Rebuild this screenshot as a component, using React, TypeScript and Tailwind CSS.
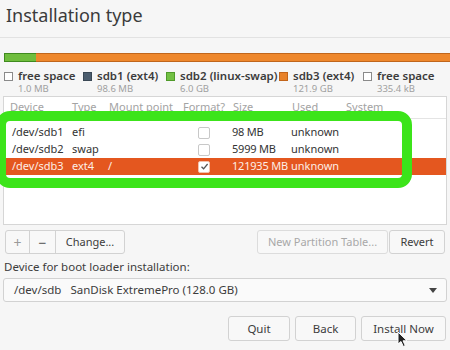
import React from 'react';

const font = { fontFamily: '"Noto Sans", "DejaVu Sans", sans-serif' };

const legend = [
  { box: 'border border-[#8a8a8a] bg-white', name: 'free space', size: '1.0 MB', w: 'w-[79px]' },
  { box: 'bg-[#4b5d6e] border border-[#3a4855]', name: 'sdb1 (ext4)', size: '98.6 MB', w: 'w-[83px]' },
  { box: 'bg-[#72c043] border border-[#4f9a2a]', name: 'sdb2 (linux-swap)', size: '6.0 GB', w: 'w-[113px]' },
  { box: 'bg-[#e8822a] border border-[#c2641a]', name: 'sdb3 (ext4)', size: '121.9 GB', w: 'w-[84px]' },
  { box: 'border border-[#8a8a8a] bg-white', name: 'free space', size: '335.4 kB', w: 'w-[80px]' },
];

const rows = [
  { dev: '/dev/sdb1', type: 'efi', mount: '', fmt: false, size: '98 MB', used: 'unknown', sel: false },
  { dev: '/dev/sdb2', type: 'swap', mount: '', fmt: false, size: '5999 MB', used: 'unknown', sel: false },
  { dev: '/dev/sdb3', type: 'ext4', mount: '/', fmt: true, size: '121935 MB', used: 'unknown', sel: true },
];

const cols = 'grid grid-cols-[62px_37px_74px_50px_59px_54px_1fr]';

const App = () => {
  return (
    <div className="relative w-[450px] h-[350px] overflow-hidden bg-[#f6f6f6] text-[#3c3c3c]" style={font}>
      {/* Title */}
      <div className="h-[38px] border-b border-[#e2e2e2] px-[6px] pt-[3px] text-[18px] leading-[25px] text-[#3b3b3b]">
        Installation type
      </div>

      {/* Partition bar */}
      <div className="mt-[15px] ml-[4px] flex h-[9px] overflow-hidden">
        <div className="w-[32px] bg-[#6fbd3d] border-y border-l border-[#3f8a1e]" />
        <div className="flex-1 bg-[#ee872c] border-y border-[#c0661c]" />
      </div>

      {/* Legend */}
      <div className="mt-[6px] flex pl-[4px]">
        {legend.map((l, i) => (
          <div key={i} className={`${l.w} flex gap-[5px]`}>
            <div className={`mt-[4px] h-[9px] w-[9px] shrink-0 ${l.box}`} />
            <div className="flex flex-col">
              <span className="text-[11.5px] leading-[15px] font-semibold text-[#3c3c3c] whitespace-nowrap">{l.name}</span>
              <span className="text-[9.5px] leading-[11px] text-[#a0a0a0]">{l.size}</span>
            </div>
          </div>
        ))}
      </div>

      {/* Table */}
      <div className="relative mx-[3px] mt-[2px]">
        <div className="h-[129px] border border-[#d6d6d6] bg-white">
          <div className={`${cols} h-[22px] items-center border-b border-[#e4e4e4] pl-[6px] text-[11px] text-[#a3a3a3]`}>
            <span>Device</span>
            <span>Type</span>
            <span>Mount point</span>
            <span>Format?</span>
            <span>Size</span>
            <span>Used</span>
            <span>System</span>
          </div>
          <div className="pt-[5px]">
            {rows.map((r, i) => (
              <div
                key={i}
                className={`${cols} h-[17px] items-center pl-[8px] text-[11px] ${r.sel ? 'bg-[#e4571f] text-[#fdeee6]' : 'text-[#333]'}`}
              >
                <span>{r.dev}</span>
                <span className="-ml-[2px]">{r.type}</span>
                <span className="-ml-[3px]">{r.mount}</span>
                <span className="flex pl-[13px]">
                  <span
                    className={`flex h-[12px] w-[12px] items-center justify-center rounded-[2px] border ${
                      r.fmt ? 'border-[#f3c2ad] bg-white' : 'border-[#c8c8c8] bg-white'
                    }`}
                  >
                    {r.fmt && (
                      <svg width="9" height="9" viewBox="0 0 9 9">
                        <path d="M1.5 4.8 L3.6 6.8 L7.6 2" fill="none" stroke="#555" strokeWidth="1.3" />
                      </svg>
                    )}
                  </span>
                </span>
                <span className="-ml-[3px] whitespace-nowrap tracking-[-0.2px]">{r.size}</span>
                <span className="-ml-[3px]">{r.used}</span>
                <span />
              </div>
            ))}
          </div>
        </div>
        {/* annotation */}
        <div className="absolute left-[-7px] top-[15px] h-[77px] w-[416px] rounded-[14px] border-[10px] border-[#3ce41a]" />
      </div>

      {/* Buttons row */}
      <div className="mt-[5px] flex px-[5px] text-[11px]">
        <div className="flex h-[24px] rounded-[3px] border border-[#d2d2d2] bg-[#f8f8f8]">
          <span className="flex w-[24px] items-center justify-center border-r border-[#d2d2d2] text-[#9a9a9a] text-[14px]">+</span>
          <span className="flex w-[26px] items-center justify-center border-r border-[#d2d2d2] text-[#555] text-[14px]">−</span>
          <span className="flex w-[68px] items-center justify-center text-[#3c3c3c]">Change...</span>
        </div>
        <div className="ml-auto flex h-[24px]">
          <span className="flex w-[131px] items-center justify-center rounded-[3px] border border-[#dcdcdc] bg-[#f8f8f8] text-[#a8a8a8]">
            New Partition Table...
          </span>
          <span className="ml-[1px] flex w-[56px] items-center justify-center rounded-[3px] border border-[#d2d2d2] bg-[#f8f8f8] text-[#3c3c3c]">
            Revert
          </span>
        </div>
      </div>

      {/* Boot loader */}
      <div className="mt-[5px] pl-[4px] text-[11.5px] leading-[15px] text-[#3c3c3c]">Device for boot loader installation:</div>
      <div className="mx-[3px] mt-[4px] flex h-[24px] items-center rounded-[3px] border border-[#d2d2d2] bg-[#fafafa] pl-[10px] pr-[9px] text-[11.5px] text-[#3c3c3c]">
        <span>/dev/sdb</span>
        <span className="ml-[9px]">SanDisk ExtremePro (128.0 GB)</span>
        <svg className="ml-auto" width="8" height="5" viewBox="0 0 8 5">
          <path d="M0 0 L8 0 L4 5 Z" fill="#444" />
        </svg>
      </div>

      {/* Bottom buttons */}
      <div className="mt-[14px] flex justify-end gap-[5px] pr-[4px] text-[11.5px] text-[#3c3c3c]">
        <span className="flex h-[25px] w-[62px] items-center justify-center rounded-[3px] border border-[#d2d2d2] bg-[#f8f8f8]">Quit</span>
        <span className="flex h-[25px] w-[61px] items-center justify-center rounded-[3px] border border-[#d2d2d2] bg-[#f8f8f8]">Back</span>
        <span className="flex h-[25px] w-[85px] items-center justify-center rounded-[3px] border border-[#d2d2d2] bg-[#f8f8f8]">Install Now</span>
      </div>

      {/* mouse cursor */}
      <svg className="absolute left-[397px] top-[331px]" width="12" height="17" viewBox="0 0 12 17">
        <path d="M1 1 L1 13 L4 10.5 L6.3 15.5 L8.3 14.6 L6 9.8 L10 9.8 Z" fill="#222" stroke="#fff" strokeWidth="1" />
      </svg>
    </div>
  );
};

export default App;
